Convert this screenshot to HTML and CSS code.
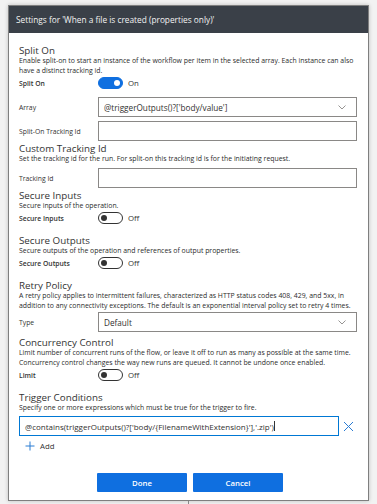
FILE: index.html
```html
<!DOCTYPE html>
<html>
<head>
<meta charset="utf-8">
<link rel="stylesheet" href="styles.css">
</head>
<body>
<div class="card">
  <div class="header">Settings for 'When a file is created (properties only)'</div>
  <div class="content">
    <div class="h h-first">Split On</div>
    <div class="desc">Enable split-on to start an instance of the workflow per item in the selected array. Each instance can also have a distinct tracking id.</div>
    <div class="row row-toggle">
      <div class="label">Split On</div>
      <div class="toggle on"><span class="knob"></span></div>
      <span class="state">On</span>
    </div>
    <div class="row row-field first-field">
      <div class="label light">Array</div>
      <div class="input select"><span>@triggerOutputs()?['body/value']</span>
        <svg class="chev" width="8" height="5" viewBox="0 0 8 5"><path d="M0.5 0.5 L4 4 L7.5 0.5" fill="none" stroke="#8a8886" stroke-width="0.9"/></svg>
      </div>
    </div>
    <div class="row row-field">
      <div class="label light">Split-On Tracking Id</div>
      <div class="input"></div>
    </div>

    <div class="h h-tight">Custom Tracking Id</div>
    <div class="desc">Set the tracking id for the run. For split-on this tracking id is for the initiating request.</div>
    <div class="row row-field">
      <div class="label light">Tracking Id</div>
      <div class="input"></div>
    </div>

    <div class="h h-tight">Secure Inputs</div>
    <div class="desc">Secure inputs of the operation.</div>
    <div class="row row-toggle">
      <div class="label">Secure Inputs</div>
      <div class="toggle"><span class="knob"></span></div>
      <span class="state">Off</span>
    </div>

    <div class="h">Secure Outputs</div>
    <div class="desc">Secure outputs of the operation and references of output properties.</div>
    <div class="row row-toggle">
      <div class="label">Secure Outputs</div>
      <div class="toggle"><span class="knob"></span></div>
      <span class="state">Off</span>
    </div>

    <div class="h">Retry Policy</div>
    <div class="desc">A retry policy applies to intermittent failures, characterized as HTTP status codes 408, 429, and 5xx, in addition to any connectivity exceptions. The default is an exponential interval policy set to retry 4 times.</div>
    <div class="row row-field first-field0">
      <div class="label light">Type</div>
      <div class="input select"><span>Default</span>
        <svg class="chev" width="8" height="5" viewBox="0 0 8 5"><path d="M0.5 0.5 L4 4 L7.5 0.5" fill="none" stroke="#8a8886" stroke-width="0.9"/></svg>
      </div>
    </div>

    <div class="h h-mid">Concurrency Control</div>
    <div class="desc">Limit number of concurrent runs of the flow, or leave it off to run as many as possible at the same time. Concurrency control changes the way new runs are queued. It cannot be undone once enabled.</div>
    <div class="row row-toggle">
      <div class="label">Limit</div>
      <div class="toggle"><span class="knob"></span></div>
      <span class="state">Off</span>
    </div>

    <div class="h">Trigger Conditions</div>
    <div class="desc">Specify one or more expressions which must be true for the trigger to fire.</div>
    <div class="cond-row">
      <div class="input cond">@contains(triggerOutputs()?['body/{FilenameWithExtension}'],'.zip')<span class="caret"></span></div>
      <svg class="close" width="11" height="11" viewBox="0 0 11 11"><path d="M1 1 L10 10 M10 1 L1 10" stroke="#2b7cd3" stroke-width="1"/></svg>
    </div>
    <div class="add">
      <svg width="10" height="10" viewBox="0 0 10 10"><path d="M5 0.5 V9.5 M0.5 5 H9.5" stroke="#2b7cd3" stroke-width="1"/></svg>
      <span>Add</span>
    </div>
  </div>
  <div class="buttons">
    <button class="btn">Done</button>
    <button class="btn">Cancel</button>
  </div>
</div>
<div class="connector"></div>
</body>
</html>
```

FILE: styles.css
```css
html, body {
  margin: 0;
  padding: 0;
}
body {
  background: #f2f2f2;
  font-family: "Segoe UI", "Open Sans", sans-serif;
  color: #323130;
  width: 377px;
  height: 504px;
  overflow: hidden;
}
.card {
  margin: 5px 0 0 8px;
  width: 359px;
  height: 494px;
  background: #fff;
  border: 1px solid #7f7f7f;
  box-shadow: 0 0 4px rgba(0, 0, 0, 0.22);
  display: flex;
  flex-direction: column;
}
.header {
  height: 27px;
  background: #3a4048;
  color: #f3f3f3;
  font-size: 8.3px;
  line-height: 27px;
  padding-left: 7px;
  flex: none;
}
.content {
  padding: 0 0 0 10px;
  flex: 1;
}
.h {
  font-size: 9.8px;
  line-height: 11px;
  color: #333;
  margin-top: 10px;
}
.h-first { margin-top: 12px; }
.h-tight { margin-top: 2px; }
.h-mid { margin-top: 5px; }
.desc {
  font-size: 6.9px;
  line-height: 10px;
  color: #2b2b2b;
  width: 335px;
}
.row {
  display: flex;
  align-items: center;
}
.row-toggle {
  height: 14px;
}
.row-field {
  margin-top: 4px;
}
.first-field {
  margin-top: 7px;
}
.first-field0 { margin-top: 1px; }
.label {
  width: 79px;
  flex: none;
  font-size: 6.8px;
  font-weight: 600;
  color: #333;
}
.label.light {
  font-weight: 400;
}
.toggle {
  width: 23px;
  height: 10px;
  border: 1px solid #333;
  border-radius: 6px;
  background: #fff;
  position: relative;
  flex: none;
}
.toggle .knob {
  position: absolute;
  top: 2px;
  left: 2px;
  width: 6px;
  height: 6px;
  border-radius: 50%;
  background: #333;
}
.toggle.on {
  background: #0f6fe0;
  border-color: #0f6fe0;
}
.toggle.on .knob {
  left: auto;
  right: 2px;
  background: #fff;
}
.state {
  font-size: 7.8px;
  margin-left: 5px;
  color: #333;
}
.input {
  height: 18px;
  border: 1px solid #8a8886;
  background: #fff;
  display: flex;
  align-items: center;
  padding: 0 10px 0 5px;
  box-sizing: content-box;
  font-size: 8.2px;
  color: #323130;
  width: 242px;
}
.select {
  justify-content: space-between;
}
.chev {
  flex: none;
}
.cond-row {
  display: flex;
  align-items: center;
  margin-top: 3px;
}
.input.cond {
  width: 313px;
  padding: 0 0 0 5px;
  border-color: #0078d4;
  font-size: 8px;
}
.caret {
  display: inline-block;
  width: 1px;
  height: 10px;
  background: #333;
}
.close {
  margin-left: 4px;
}
.add {
  display: flex;
  align-items: center;
  gap: 5px;
  margin: 5px 0 0 6px;
  font-size: 7.8px;
  color: #333;
}
.buttons {
  display: flex;
  justify-content: center;
  gap: 6px;
  padding-bottom: 8px;
  margin-left: 3px;
}
.btn {
  width: 90px;
  height: 19px;
  background: #0f6fe0;
  color: #fff;
  border: none;
  border-radius: 1px;
  font-family: "Segoe UI", "Open Sans", sans-serif;
  font-size: 7.8px;
  font-weight: 600;
  padding: 0;
}
.connector {
  width: 1px;
  height: 4px;
  background: #888;
  margin-left: 188px;
}
```
